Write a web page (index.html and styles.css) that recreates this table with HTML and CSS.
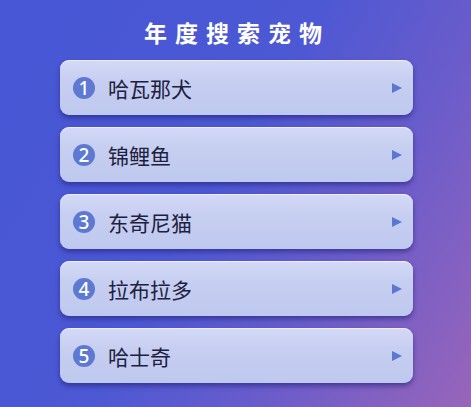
FILE: index.html
```html
<!DOCTYPE html>
<html lang="zh">
<head>
<meta charset="utf-8">
<link rel="stylesheet" href="styles.css">
</head>
<body>
<div class="page">
  <h1 class="title">年度搜索宠物</h1>
  <ul class="list">
    <li class="card"><span class="num">1</span><span class="name">哈瓦那犬</span><span class="arrow"></span></li>
    <li class="card"><span class="num">2</span><span class="name">锦鲤鱼</span><span class="arrow"></span></li>
    <li class="card"><span class="num">3</span><span class="name">东奇尼猫</span><span class="arrow"></span></li>
    <li class="card"><span class="num">4</span><span class="name">拉布拉多</span><span class="arrow"></span></li>
    <li class="card"><span class="num">5</span><span class="name">哈士奇</span><span class="arrow"></span></li>
  </ul>
</div>
</body>
</html>
```
FILE: styles.css
```css
html, body {
  margin: 0;
  padding: 0;
  width: 471px;
  height: 407px;
  overflow: hidden;
}
body {
  background: linear-gradient(120deg, #4757d5 0%, #4c58d4 45%, #6a5ccb 70%, #9865ba 100%);
  font-family: "Noto Sans CJK SC", "Noto Sans", sans-serif;
}
.page {
  display: flex;
  flex-direction: column;
  align-items: center;
  padding-top: 13px;
  padding-left: 2px;
}
.title {
  margin: 0;
  color: #ffffff;
  font-size: 23px;
  font-weight: 700;
  letter-spacing: 8px;
  line-height: 38px;
  padding-left: 1px;
}
.list {
  list-style: none;
  margin: 9px 0 0 0;
  padding: 0;
  display: flex;
  flex-direction: column;
  gap: 12px;
}
.card {
  box-sizing: border-box;
  width: 353px;
  height: 55px;
  display: flex;
  align-items: center;
  padding: 0 11px 0 13px;
  border-radius: 9px;
  background: linear-gradient(180deg, #d3d9f6 0%, #c6cef1 40%, #bfc8ee 100%);
  box-shadow: 0 3px 5px rgba(30, 30, 110, 0.55), inset 0 1px 0 rgba(255,255,255,0.6);
}
.num {
  width: 22px;
  height: 22px;
  border-radius: 50%;
  background: #5e79d2;
  color: #fff;
  font-family: "Noto Sans", sans-serif;
  font-size: 19px;
  font-weight: 500;
  line-height: 22px;
  display: flex;
  align-items: center;
  justify-content: center;
  flex-shrink: 0;
}
.name {
  margin-left: 13px;
  font-size: 21px;
  color: #1d2140;
  flex: 1;
}
.arrow {
  width: 0;
  height: 0;
  border-top: 5px solid transparent;
  border-bottom: 5px solid transparent;
  border-left: 10px solid #5b77d0;
}
```
